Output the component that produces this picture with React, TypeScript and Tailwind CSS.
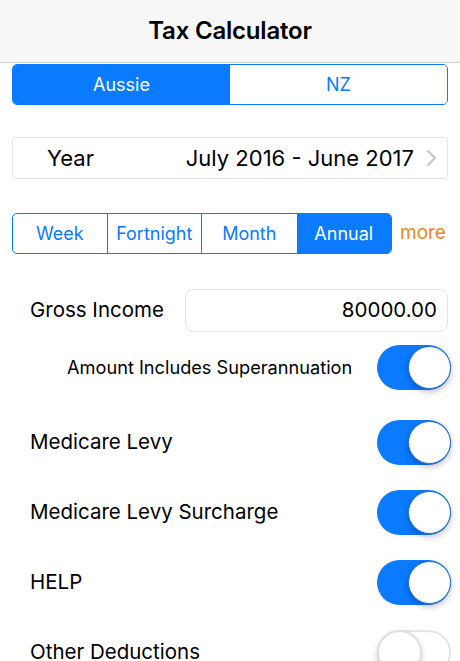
import React from "react";

const font = { fontFamily: "Inter, 'Noto Sans', sans-serif" };

function Toggle({ on }: { on: boolean }) {
  return on ? (
    <div className="relative w-[74px] h-[45px] rounded-full bg-[#0a7aff] shrink-0">
      <div className="absolute right-0 top-[1px] w-[43px] h-[43px] rounded-full bg-white border border-[#1b6fd6] shadow-[0_3px_6px_rgba(0,0,0,0.25)]" />
    </div>
  ) : (
    <div className="relative w-[74px] h-[45px] rounded-full bg-white border-2 border-[#e6e6e6] shrink-0">
      <div className="absolute left-[-2px] top-[-2px] w-[45px] h-[45px] rounded-full bg-white border-2 border-[#e0e0e0] shadow-[0_3px_6px_rgba(0,0,0,0.18)]" />
    </div>
  );
}

function ToggleRow({ label, on }: { label: string; on: boolean }) {
  return (
    <div className="flex items-center justify-between pl-[30px] pr-[9px] h-[45px]">
      <span className="text-[20.5px] text-black whitespace-nowrap">{label}</span>
      <Toggle on={on} />
    </div>
  );
}

export default function App() {
  return (
    <div className="w-[460px] h-[661px] bg-white overflow-hidden" style={font}>
      <div className="h-[63px] bg-[#f7f7f7] border-b border-[#cdcdcd] flex items-center justify-center">
        <span className="text-[24px] font-semibold text-black tracking-[-0.2px]">Tax Calculator</span>
      </div>
      <div className="px-3 pt-[1px]">
        <div className="grid grid-cols-2 h-[41px] rounded-[5px] border border-[#0a7aff] overflow-hidden">
          <div className="bg-[#0a7aff] text-white flex items-center justify-center text-[18px]">Aussie</div>
          <div className="bg-white text-[#0a7aff] flex items-center justify-center text-[18px]">NZ</div>
        </div>
        <div className="mt-[32px] h-[42px] rounded-[4px] border border-[#e4e4e4] flex items-center pl-[34px] pr-[10px]">
          <span className="text-[22px] text-black">Year</span>
          <span className="ml-auto text-[22px] text-black">July 2016 - June 2017</span>
          <svg width="11" height="18" viewBox="0 0 11 18" className="ml-[12px]">
            <path d="M2 2 L9 9 L2 16" stroke="#c7c7cc" strokeWidth="2.2" fill="none" strokeLinecap="round" strokeLinejoin="round" />
          </svg>
        </div>
        <div className="mt-[34px] flex items-center">
          <div className="grid grid-cols-4 w-[380px] h-[41px] rounded-[5px] border border-[#0a7aff] overflow-hidden text-[18px]">
            <div className="flex items-center justify-center text-[#0a7aff] border-r border-[#0a7aff]">Week</div>
            <div className="flex items-center justify-center text-[#0a7aff] border-r border-[#0a7aff]">Fortnight</div>
            <div className="flex items-center justify-center text-[#0a7aff]">Month</div>
            <div className="flex items-center justify-center text-white bg-[#0a7aff]">Annual</div>
          </div>
          <span className="ml-[8px] text-[19px] text-[#e8891c]">more</span>
        </div>
      </div>
      <div className="mt-[35px] flex items-center pl-[30px] pr-3">
        <span className="text-[20.5px] text-black">Gross Income</span>
        <div className="ml-auto w-[263px] h-[43px] rounded-[8px] border border-[#e4e4e4] flex items-center justify-end pr-[10px]">
          <span className="text-[20.5px] text-black">80000.00</span>
        </div>
      </div>
      <div className="mt-[13px] flex items-center justify-between pl-[67px] pr-[9px] h-[45px]">
        <span className="text-[18.2px] text-black">Amount Includes Superannuation</span>
        <Toggle on={true} />
      </div>
      <div className="mt-[30px] flex flex-col gap-[25px]">
        <ToggleRow label="Medicare Levy" on={true} />
        <ToggleRow label="Medicare Levy Surcharge" on={true} />
        <ToggleRow label="HELP" on={true} />
        <ToggleRow label="Other Deductions" on={false} />
      </div>
    </div>
  );
}
